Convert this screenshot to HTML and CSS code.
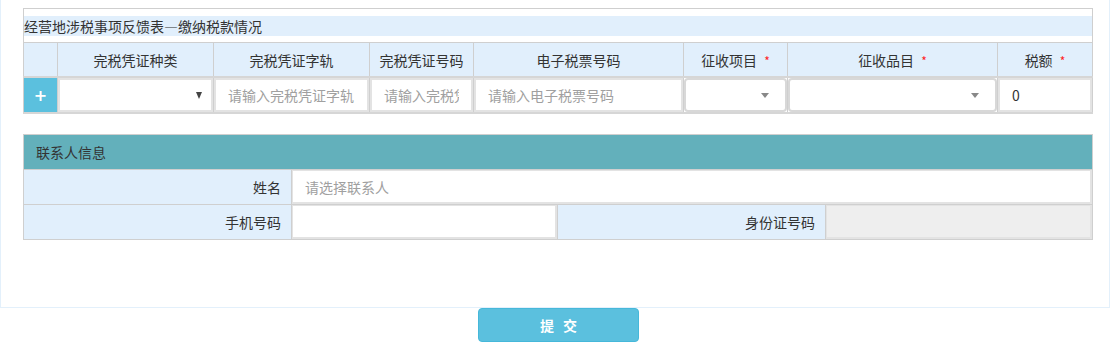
FILE: index.html
```html
<!DOCTYPE html>
<html lang="zh">
<head>
    <meta charset="UTF-8">
    <title>经营地涉税事项反馈表</title>
    <link rel="stylesheet" href="styles.css">
</head>
<body>
<div class="panel">
    <table class="grid tax-table">
        <colgroup>
            <col style="width:34px">
            <col style="width:156px">
            <col style="width:156px">
            <col style="width:104px">
            <col style="width:210px">
            <col style="width:104px">
            <col style="width:210px">
            <col style="width:95px">
        </colgroup>
        <tr>
            <td colspan="8" class="title-cell"><div class="title-band">经营地涉税事项反馈表—缴纳税款情况</div></td>
        </tr>
        <tr class="head-row">
            <th></th>
            <th>完税凭证种类</th>
            <th>完税凭证字轨</th>
            <th>完税凭证号码</th>
            <th>电子税票号码</th>
            <th>征收项目 <span class="req">*</span></th>
            <th>征收品目 <span class="req">*</span></th>
            <th>税额 <span class="req">*</span></th>
        </tr>
        <tr class="data-row">
            <td class="add-cell">+</td>
            <td><div class="field select-plain"><span></span><span class="arrow-dark"></span></div></td>
            <td><input class="field" type="text" placeholder="请输入完税凭证字轨"></td>
            <td><input class="field" type="text" placeholder="请输入完税凭证号码"></td>
            <td><input class="field" type="text" placeholder="请输入电子税票号码"></td>
            <td><div class="field select-box"><span></span><span class="arrow-gray"></span></div></td>
            <td><div class="field select-box"><span></span><span class="arrow-gray"></span></div></td>
            <td><input class="field" type="text" value="0"></td>
        </tr>
    </table>

    <table class="grid contact-table">
        <colgroup>
            <col style="width:268px">
            <col style="width:266px">
            <col style="width:268px">
            <col style="width:267px">
        </colgroup>
        <tr>
            <td colspan="4" class="section-head">联系人信息</td>
        </tr>
        <tr class="form-row">
            <td class="label">姓名</td>
            <td colspan="3"><input class="field" type="text" placeholder="请选择联系人"></td>
        </tr>
        <tr class="form-row">
            <td class="label">手机号码</td>
            <td><input class="field" type="text"></td>
            <td class="label">身份证号码</td>
            <td><input class="field disabled" type="text" disabled></td>
        </tr>
    </table>
</div>
<div class="actions">
    <button type="button" class="btn-submit">提&nbsp;交</button>
</div>
</body>
</html>
```

FILE: styles.css
```css
body {
    margin: 0;
    font-family: "Noto Sans CJK SC", "Microsoft YaHei", sans-serif;
    font-size: 14px;
    color: #333;
    background-color: #fff;
}

.panel {
    border: 1px solid #e3f0fb;
    border-top: none;
    padding: 8px 17px 67px 22px;
}

.grid {
    border-collapse: collapse;
    table-layout: fixed;
    width: 1070px;
    border: 1px solid #cfcfcf;
}

.grid td,
.grid th {
    border: 1px solid #cfcfcf;
    padding: 0;
    height: 33px;
}

.grid .title-cell {
    height: 20px;
    padding: 7px 0 6px;
}

.title-band {
    background-color: #e1effc;
    height: 20px;
    line-height: 20px;
    font-size: 14px;
    white-space: nowrap;
}

.head-row th {
    background-color: #e1effc;
    font-weight: normal;
    text-align: center;
    height: 33px;
    border-bottom: 2px solid #d6d6d6;
}

.req {
    color: #f22;
    font-size: 12px;
    margin-left: 4px;
}

.data-row td {
    background-color: #fff;
    height: 34px;
    border-bottom: 2px solid #d6d6d6;
}

.grid .add-cell {
    background-color: #5bc0de;
    color: #fff;
    font-weight: bold;
    font-size: 16px;
    font-family: "DejaVu Sans", sans-serif;
    text-align: center;
}

.field {
    box-sizing: border-box;
    width: 100%;
    height: 34px;
    margin: 0;
    border: 2px solid #e3e3e3;
    background-color: #fff;
    padding: 0 12px;
    font-family: inherit;
    font-size: 14px;
    color: #333;
    outline: none;
    display: block;
}

.field::placeholder {
    color: #a0a0a0;
}

.select-plain,
.select-box {
    display: flex;
    align-items: center;
    justify-content: space-between;
}

.select-box {
    border-radius: 4px;
    border-color: #d8d8d8;
}

.arrow-dark {
    width: 0;
    height: 0;
    border-left: 3px solid transparent;
    border-right: 3px solid transparent;
    border-top: 7px solid #444;
    margin-right: -3px;
}

.arrow-gray {
    width: 0;
    height: 0;
    border-left: 4px solid transparent;
    border-right: 4px solid transparent;
    border-top: 5px solid #888;
    margin-right: 4px;
}

.contact-table {
    margin-top: 20px;
}

.grid .section-head {
    background-color: #63b0bb;
    padding-left: 12px;
    color: #333;
    height: 34px;
}

.form-row td {
    height: 34px;
}

.form-row .label {
    background-color: #e1effc;
    text-align: right;
    padding-right: 10px;
}

.form-row .field {
    border-width: 1px 2px 2px 1px;
    border-color: #e3e3e3;
}

.field.disabled {
    background-color: #eee;
}

.actions {
    display: flex;
    justify-content: center;
    padding-left: 7px;
}

.btn-submit {
    width: 161px;
    height: 34px;
    background-color: #5bc0de;
    border: 1px solid #46b8da;
    border-radius: 4px;
    color: #fff;
    font-family: inherit;
    font-size: 14px;
    font-weight: bold;
    letter-spacing: 3px;
    text-indent: 3px;
    cursor: pointer;
}
```
